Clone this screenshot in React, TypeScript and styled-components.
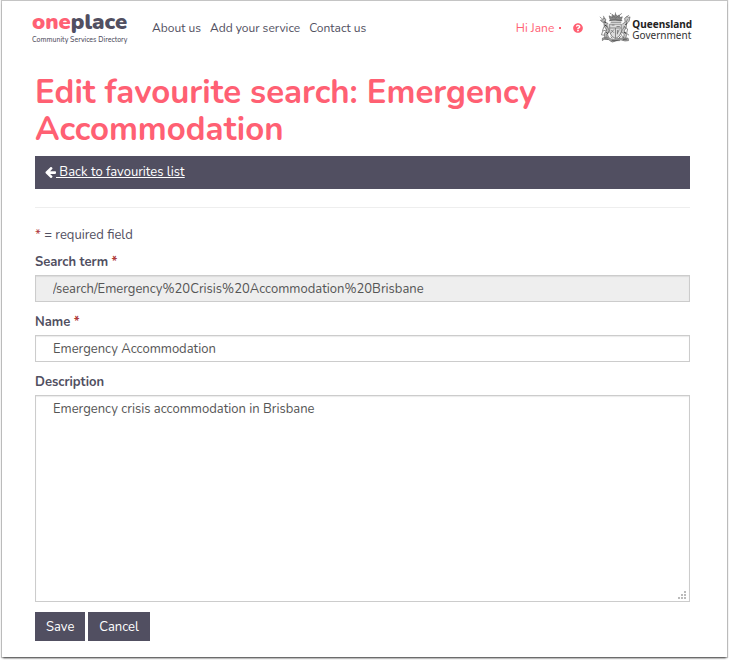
import React from "react";
import styled, { createGlobalStyle } from "styled-components";
import { FaQuestionCircle } from "react-icons/fa";

const ink = "#514f61";
const coral = "#ff6073";

const GlobalStyle = createGlobalStyle`
  *, *::before, *::after { box-sizing: border-box; }
  body {
    margin: 0;
    background: #fff;
    color: ${ink};
    font-family: Nunito, Lato, "Open Sans", sans-serif;
    font-size: 13px;
    line-height: 20px;
  }
  button, input, textarea { font: inherit; color: inherit; }
`;

const Page = styled.div`
  margin: 1px 2px 3px;
  background: #fff;
  box-shadow: 0 2px 2px -1px #444, 0 0 1px 1px #c4c4c4;
`;

const Header = styled.header`
  display: flex;
  align-items: center;
  padding: 0 35px 0 30px;
  height: 53px;
  font-size: 12px;
`;

const Brand = styled.a`
  display: flex;
  flex-direction: column;
  width: 94px;
  color: ${ink};
  text-decoration: none;
`;

const BrandName = styled.span`
  font-size: 22px;
  font-weight: 900;
  line-height: 25px;
`;

const BrandAccent = styled.span`
  color: ${coral};
`;

const BrandTagline = styled.span`
  font-size: 7px;
  font-weight: 500;
  line-height: 10px;
  white-space: nowrap;
`;

const Nav = styled.nav`
  display: flex;
  gap: 9px;
  margin-left: 26px;
`;

const NavLink = styled.a`
  color: ${ink};
  text-decoration: none;
  white-space: nowrap;
`;

const Account = styled.div`
  display: flex;
  align-items: center;
  gap: 12px;
  margin-left: auto;
  color: ${coral};
`;

const PlainButton = styled.button`
  display: flex;
  align-items: center;
  gap: 5px;
  padding: 0;
  border: 0;
  background: none;
  color: ${coral};
`;

const Caret = styled.span`
  width: 2px;
  height: 2px;
  background: ${coral};
`;

const Government = styled.a`
  display: flex;
  align-items: center;
  gap: 1px;
  margin-left: 16px;
  color: #333;
  text-decoration: none;
`;

const GovernmentName = styled.span`
  padding-top: 4px;
  font-family: "Noto Sans", sans-serif;
  font-size: 10px;
  line-height: 11px;
`;

const GovernmentState = styled.strong`
  display: block;
  color: #222;
`;

const Main = styled.main`
  padding: 20px 37px 16px 33px;
`;

const Title = styled.h1`
  margin: 0 0 8px;
  color: ${coral};
  font-size: 33px;
  font-weight: 700;
  line-height: 37px;
`;

const BackBar = styled.div`
  display: flex;
  padding: 6px 10px 7px;
  background: ${ink};
`;

const BackLink = styled.a`
  display: flex;
  align-items: center;
  color: #fff;
`;

const BackText = styled.span`
  white-space: pre;
  text-decoration: underline;
`;

const Divider = styled.hr`
  margin: 18px 0 17px;
  border: 0;
  border-top: 1px solid #eee;
`;

const Hint = styled.p`
  margin: 0 0 7px;
`;

const Required = styled.span`
  color: #b03a3a;
`;

const Field = styled.div`
  display: flex;
  flex-direction: column;
  margin-bottom: 10px;
`;

const Label = styled.label`
  margin-bottom: 3px;
  font-weight: 700;
`;

const TextInput = styled.input`
  width: 100%;
  height: 27px;
  padding: 3px 17px 2px;
  border: 1px solid #ccc;
  border-radius: 0;
  background: #fff;
  box-shadow: inset 0 1px 1px rgba(0, 0, 0, 0.08);
  color: #555;
  &:read-only { background: #eee; }
`;

const AreaWrap = styled.div`
  position: relative;
  display: flex;
`;

const TextArea = styled.textarea`
  width: 100%;
  height: 207px;
  padding: 3px 17px;
  border: 1px solid #ccc;
  border-radius: 0;
  box-shadow: inset 0 1px 1px rgba(0, 0, 0, 0.08);
  color: #555;
  resize: vertical;
  &::-webkit-resizer { background: transparent; }
`;

const Grip = styled.svg`
  position: absolute;
  right: 4px;
  bottom: 3px;
  pointer-events: none;
`;

const Actions = styled.div`
  display: flex;
  gap: 3px;
`;

const ActionButton = styled.button`
  height: 29px;
  padding: 0 11px;
  border: 0;
  background: ${ink};
  color: #fff;
`;

function BackArrow() {
  return (
    <svg width="11" height="11" viewBox="0 0 1536 1408" fill="currentColor" aria-hidden="true">
      <path d="M1536 640v128q0 53-32.500 90.500t-84.500 37.500h-704l293 294q38 36 38 90t-38 90l-75 76q-37 37-90 37-52 0-91-37l-651-652q-37-37-37-90 0-52 37-91l651-650q38-38 91-38 52 0 90 38l75 74q38 38 38 91t-38 91l-293 293h704q52 0 84.500 37.500t32.500 90.500z" />
    </svg>
  );
}

function Crest() {
  return (
    <svg width="32" height="31" viewBox="0 0 66 62" fill="none" stroke="#666" strokeWidth="1.5" aria-hidden="true">
      <path d="M23 15l-2-8 5 3 2-6 4 4 2-5 3 5 5-3 1 6 5-2-3 8z" fill="#888" />
      <path d="M21 17q13-4 27 0M24 20h22" strokeWidth="2" />
      <path d="M22 24h24v16q-2 10-12 14-10-4-12-14z" fill="#ddd" />
      <path d="M22 32h24M34 32v21M26 26h6M36 29h7M25 36l6 6M31 35l-7 8M38 36v9M42 35l-4 8" />
      <path d="M19 23l-6-3 1-6-5-3-1 4-5 1 4 4 3 1 1 8 5 7-5 8 1 8 5-1-1-6 5-5" fill="#bbb" />
      <path d="M6 13L2 9M12 13L9 7M15 25l-5 5-3 8M16 36l-8 2-3 8 6 1M17 29l4 8-4 8 4 8" />
      <path d="M48 24l6-4-1-8 5-4 3 3 3-2-2 9-5 5-1 8-4 7 5 7-2 9-5-1 2-7-5-6" fill="#ccc" />
      <path d="M57 9l5-3M59 14l-3 6 2 3M51 29l8 5-2 9 5 4M48 35l-3 9 5 9M53 28l-4 7" />
      <path d="M27 11l4-3 3 4 5-4 3 4M34 3V0M26 4l-3-3M43 5l4-3" />
      <path d="M7 53q8-4 14 0t13 2 13-2 13 0l1 5q-8 2-14-1t-13 2-13-2-14 1z" fill="#aaa" />
      <path d="M11 55l8 1M26 58h17M49 56l9-1M24 50l4 3M45 49l-4 4" stroke="#444" />
      <path d="M10 19l4 2M12 26l5 3M15 41l4 3M51 41l5 2M54 25l4-2" stroke="#333" strokeWidth="2" />
    </svg>
  );
}

export default function App() {
  return (
    <>
      <GlobalStyle />
      <Page>
        <Header>
          <Brand href="#">
            <BrandName><BrandAccent>one</BrandAccent>place</BrandName>
            <BrandTagline>Community Services Directory</BrandTagline>
          </Brand>
          <Nav>
            <NavLink href="#">About us</NavLink>
            <NavLink href="#">Add your service</NavLink>
            <NavLink href="#">Contact us</NavLink>
          </Nav>
          <Account>
            <PlainButton type="button">Hi Jane <Caret /></PlainButton>
            <PlainButton type="button" aria-label="Help"><FaQuestionCircle size={10} /></PlainButton>
          </Account>
          <Government href="#">
            <Crest />
            <GovernmentName>
              <GovernmentState>Queensland</GovernmentState>
              Government
            </GovernmentName>
          </Government>
        </Header>
        <Main>
          <Title>Edit favourite search: Emergency Accommodation</Title>
          <BackBar>
            <BackLink href="#">
              <BackArrow />
              <BackText> Back to favourites list</BackText>
            </BackLink>
          </BackBar>
          <Divider />
          <form onSubmit={(event) => event.preventDefault()}>
            <Hint><Required>*</Required> = required field</Hint>
            <Field>
              <Label htmlFor="term">Search term <Required>*</Required></Label>
              <TextInput id="term" readOnly value="/search/Emergency%20Crisis%20Accommodation%20Brisbane" />
            </Field>
            <Field>
              <Label htmlFor="name">Name <Required>*</Required></Label>
              <TextInput id="name" defaultValue="Emergency Accommodation" />
            </Field>
            <Field>
              <Label htmlFor="description">Description</Label>
              <AreaWrap>
                <TextArea id="description" defaultValue="Emergency crisis accommodation in Brisbane" />
                <Grip width="8" height="8" fill="#bbb" aria-hidden="true">
                  <path d="M6 0h2v2h-2zM3 3h2v2h-2zM6 3h2v2h-2zM0 6h2v2h-2zM3 6h2v2h-2zM6 6h2v2h-2z" />
                </Grip>
              </AreaWrap>
            </Field>
            <Actions>
              <ActionButton type="submit">Save</ActionButton>
              <ActionButton type="button">Cancel</ActionButton>
            </Actions>
          </form>
        </Main>
      </Page>
    </>
  );
}
